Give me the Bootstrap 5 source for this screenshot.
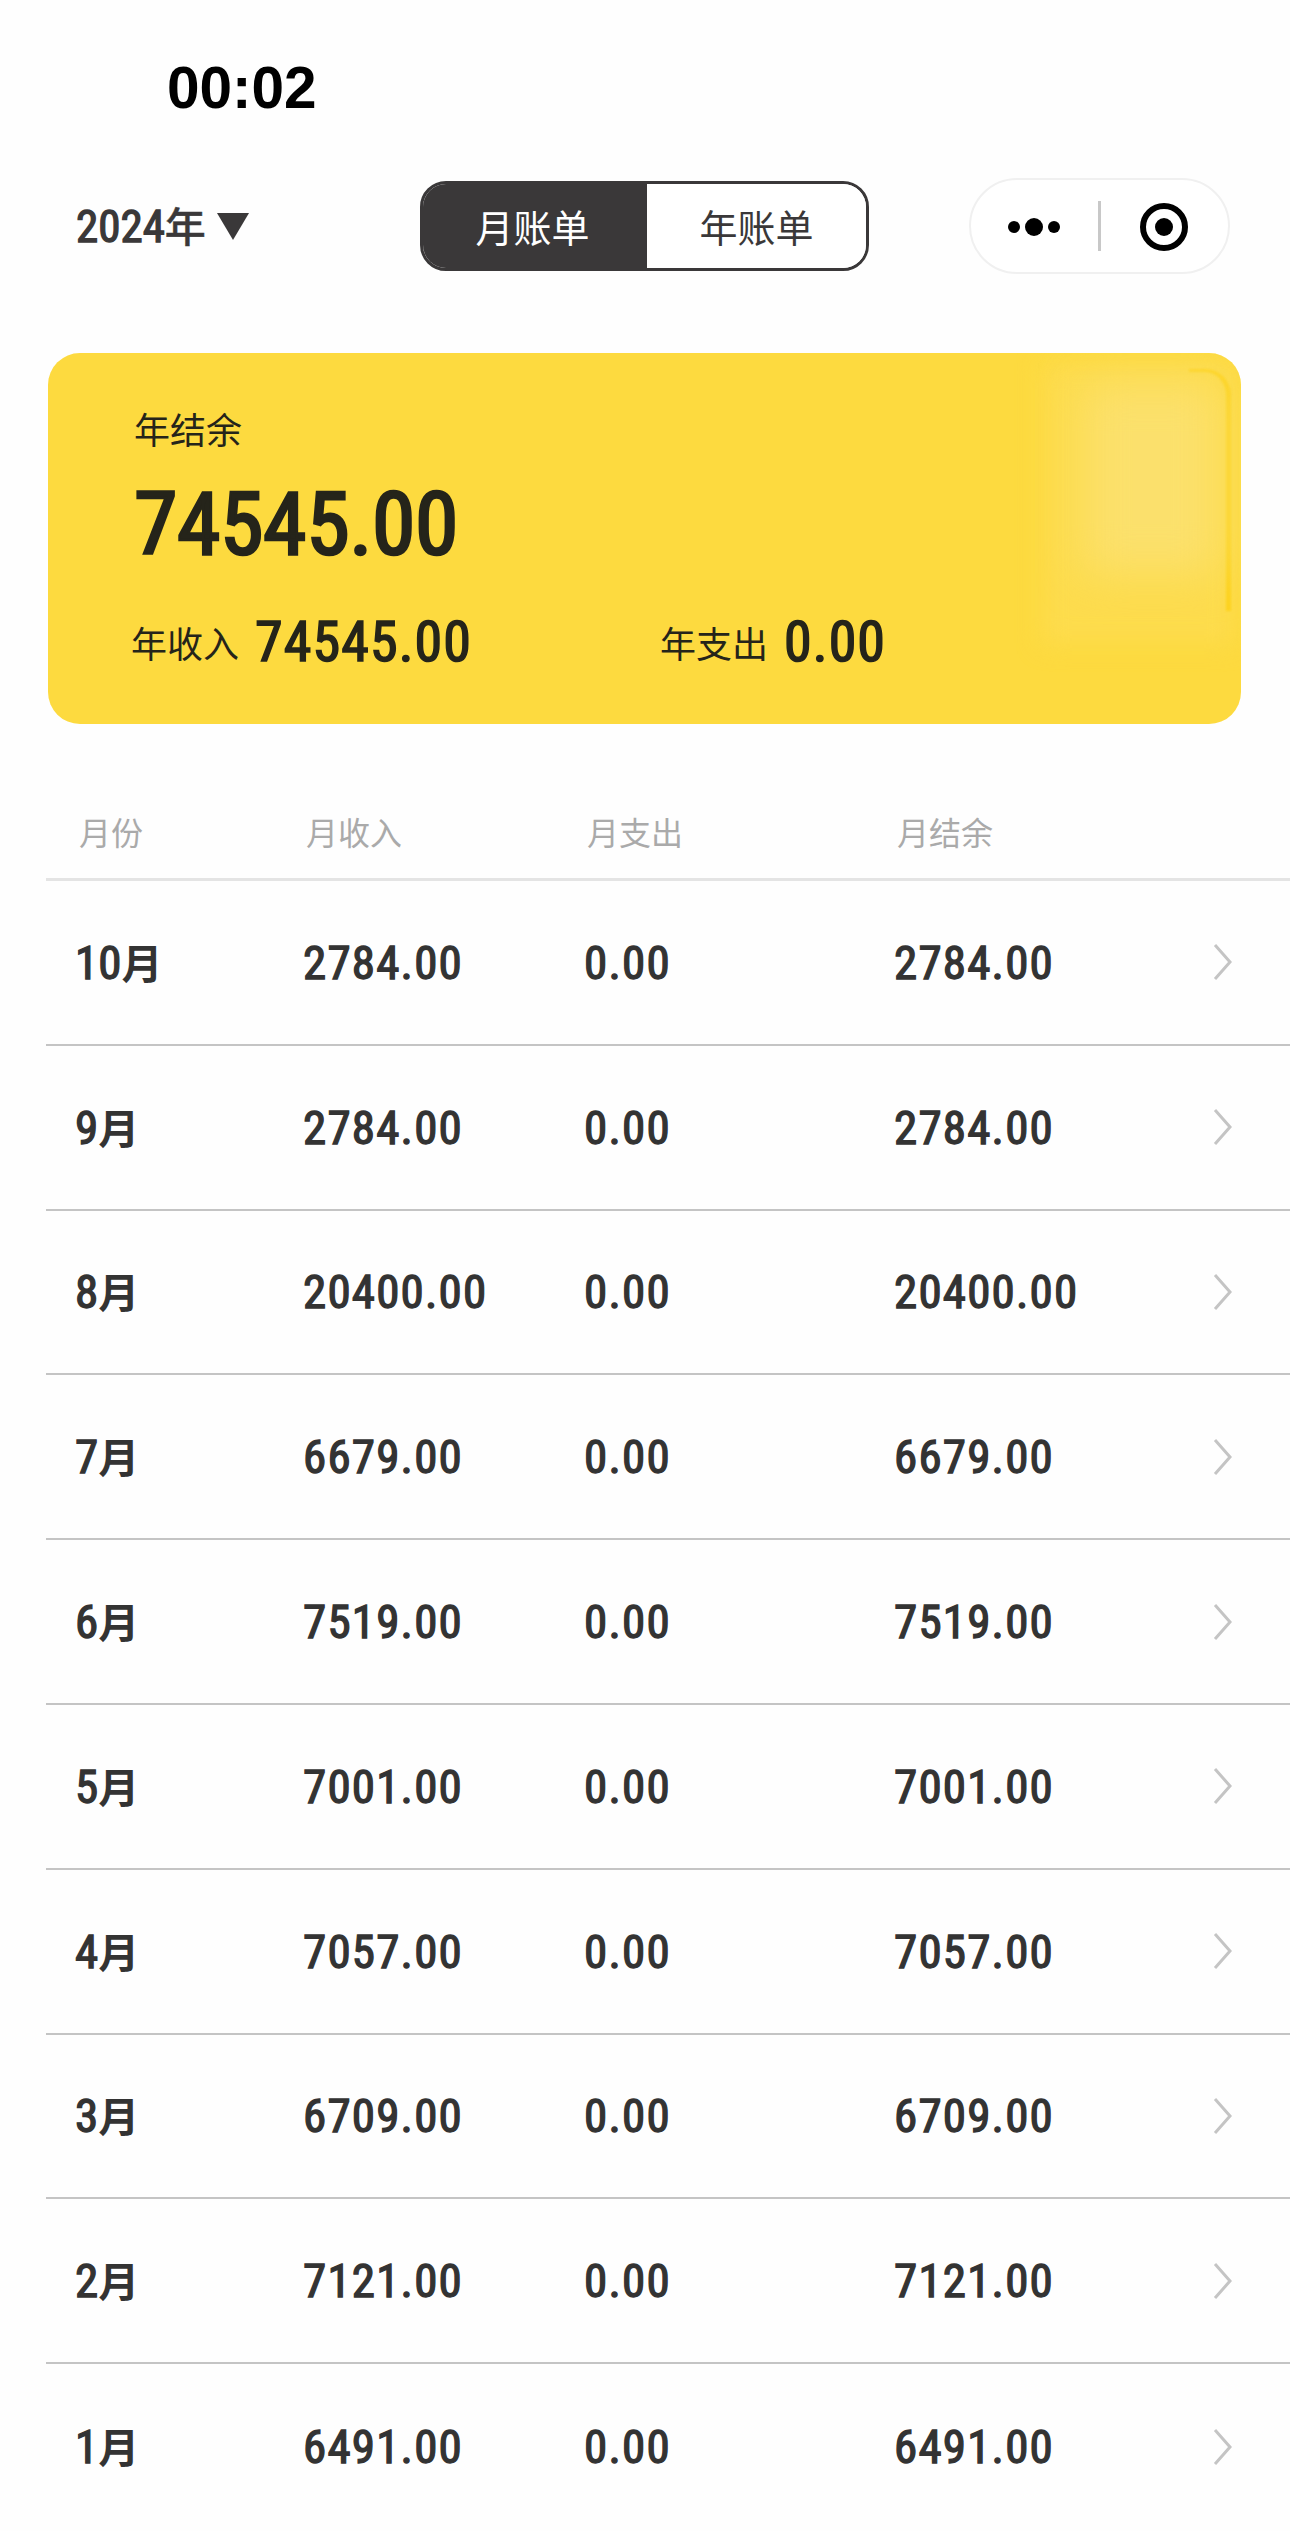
<!doctype html>
<html lang="zh-CN"><head><meta charset="utf-8"><title>账单</title>
<link rel="stylesheet" href="https://cdn.jsdelivr.net/npm/bootstrap@5.3.0/dist/css/bootstrap.min.css">
<style>
:root{--num:"Liberation Sans Narrow","Roboto Condensed","Liberation Sans","Noto Sans CJK SC",sans-serif;--cjk:"Noto Sans CJK SC",sans-serif}
html,body{margin:0;background:#fefefe}
body{width:1290px;height:2531px;overflow:hidden;font-family:var(--cjk);color:#333}
.st-time{height:178px;padding:58px 0 0 167px;font:700 58.5px/60px "Liberation Sans",sans-serif;color:#000;margin-bottom:0}
.top-bar{height:96px;margin-bottom:79px;padding:0 61px 0 76px}
.year-pick{width:344px;flex:none;font-family:var(--num);font-weight:400;-webkit-text-stroke:1.3px #3a3839;font-size:45px;color:#3a3839;gap:11px;line-height:1}
.year-pick b{font:500 41px/1 var(--cjk);-webkit-text-stroke:.4px #3a3839}
.seg{width:449px;height:90px;border:3px solid #3a3839;border-radius:26px;overflow:hidden;margin-right:100px;flex:none}
.seg span{flex:1 1 0;font-size:38px;line-height:1;color:#3a3839;background:#fff;text-align:center}
.seg span.on{background:#3a3839;color:#fff;flex:0 0 224px;padding-right:5px}
.capsule{width:261px;height:96px;border:2px solid #f0f0f0;border-radius:48px;background:#fff;flex:none}
.bal-card{margin:0 49px 0 48px;height:371px;background:#fdda3f;border-radius:32px;padding:0 0 0 84px;overflow:hidden;color:#25241a}
.glow{top:30px;right:22px;width:135px;height:190px;background:#fbe06c;filter:blur(22px)}
.glow2{top:10px;right:8px;width:190px;height:280px;background:#fddc4d;filter:blur(12px)}
.edge{top:16px;right:10px;width:42px;height:242px;border-right:5px solid #fdd31f;border-top:3px solid #fdd31f;border-radius:0 26px 0 0;filter:blur(1px)}
.b-label{position:relative;font-size:36px;line-height:1;padding-top:57px;margin-left:2px}
.b-total{position:relative;font:400 88px/1 var(--num);-webkit-text-stroke:2.6px #25241a;letter-spacing:-.4px;margin-top:34px;margin-left:2px}
.b-row{position:relative;margin-top:46px;margin-left:-1px;line-height:1}
.b-row .lbl{font-size:36px}
.b-row .val{font:400 56px/1 var(--num);-webkit-text-stroke:1.5px #25241a;letter-spacing:1.1px;margin-left:16px}
.b-cell{width:529px}
.tbl{margin:91px 0 0 46px}
.g-row{display:grid;grid-template-columns:227px 281px 310px 319px 1fr;align-items:center;padding-left:30px}
.g-head{height:66px;border-bottom:3px solid #e4e4e4;font-size:32px;line-height:1;color:#aaa;align-items:start}
.g-head span{padding-left:3px}
.g-body{height:164.8px;border-bottom:2px solid #c4c4c4;font:400 47px/1 var(--num);-webkit-text-stroke:1.3px #333;letter-spacing:1.2px;color:#333}
.g-body:last-child{border-bottom:0}
.g-body .m{letter-spacing:0;margin-left:-1px}
.g-body .m i{font:700 41px/1 var(--cjk);-webkit-text-stroke:0}
.chev{width:19px;height:36px;display:block}
</style></head><body>
<div class="st-time">00:02</div>
<div class="top-bar d-flex align-items-center">
  <div class="year-pick d-flex align-items-center"><span>2024<b>年</b></span><svg width="32" height="27" viewBox="0 0 32 27"><path d="M0 0H32L16 27Z" fill="#3a3839"/></svg></div>
  <div class="seg d-flex"><span class="on d-flex align-items-center justify-content-center">月账单</span><span class="d-flex align-items-center justify-content-center">年账单</span></div>
  <div class="capsule">
    <svg width="256" height="92" viewBox="0 0 256 92" class="d-block"><circle cx="43" cy="47" r="6" /><circle cx="63" cy="47" r="9"/><circle cx="83" cy="47" r="6"/><rect x="127" y="21" width="3" height="50" fill="#c8c8c8"/><circle cx="193" cy="47" r="21" fill="none" stroke="#000" stroke-width="6"/><circle cx="193" cy="47" r="9"/></svg>
  </div>
</div>
<div class="bal-card position-relative">
  <div class="glow2 position-absolute"></div><div class="edge position-absolute"></div><div class="glow position-absolute"></div>
  <div class="b-label">年结余</div>
  <div class="b-total">74545.00</div>
  <div class="b-row d-flex align-items-center">
    <div class="b-cell d-flex align-items-center"><span class="lbl">年收入</span><span class="val">74545.00</span></div>
    <div class="d-flex align-items-center"><span class="lbl">年支出</span><span class="val">0.00</span></div>
  </div>
</div>
<div class="tbl">
  <div class="g-row g-head"><span>月份</span><span>月收入</span><span>月支出</span><span>月结余</span></div>
  <div class="g-row g-body"><span class="m">10<i>月</i></span><span>2784.00</span><span>0.00</span><span>2784.00</span><svg class="chev" viewBox="0 0 19 36"><path d="M2 1L17 18L2 35" fill="none" stroke="#c4c4c4" stroke-width="3"/></svg></div>
  <div class="g-row g-body"><span class="m">9<i>月</i></span><span>2784.00</span><span>0.00</span><span>2784.00</span><svg class="chev" viewBox="0 0 19 36"><path d="M2 1L17 18L2 35" fill="none" stroke="#c4c4c4" stroke-width="3"/></svg></div>
  <div class="g-row g-body"><span class="m">8<i>月</i></span><span>20400.00</span><span>0.00</span><span>20400.00</span><svg class="chev" viewBox="0 0 19 36"><path d="M2 1L17 18L2 35" fill="none" stroke="#c4c4c4" stroke-width="3"/></svg></div>
  <div class="g-row g-body"><span class="m">7<i>月</i></span><span>6679.00</span><span>0.00</span><span>6679.00</span><svg class="chev" viewBox="0 0 19 36"><path d="M2 1L17 18L2 35" fill="none" stroke="#c4c4c4" stroke-width="3"/></svg></div>
  <div class="g-row g-body"><span class="m">6<i>月</i></span><span>7519.00</span><span>0.00</span><span>7519.00</span><svg class="chev" viewBox="0 0 19 36"><path d="M2 1L17 18L2 35" fill="none" stroke="#c4c4c4" stroke-width="3"/></svg></div>
  <div class="g-row g-body"><span class="m">5<i>月</i></span><span>7001.00</span><span>0.00</span><span>7001.00</span><svg class="chev" viewBox="0 0 19 36"><path d="M2 1L17 18L2 35" fill="none" stroke="#c4c4c4" stroke-width="3"/></svg></div>
  <div class="g-row g-body"><span class="m">4<i>月</i></span><span>7057.00</span><span>0.00</span><span>7057.00</span><svg class="chev" viewBox="0 0 19 36"><path d="M2 1L17 18L2 35" fill="none" stroke="#c4c4c4" stroke-width="3"/></svg></div>
  <div class="g-row g-body"><span class="m">3<i>月</i></span><span>6709.00</span><span>0.00</span><span>6709.00</span><svg class="chev" viewBox="0 0 19 36"><path d="M2 1L17 18L2 35" fill="none" stroke="#c4c4c4" stroke-width="3"/></svg></div>
  <div class="g-row g-body"><span class="m">2<i>月</i></span><span>7121.00</span><span>0.00</span><span>7121.00</span><svg class="chev" viewBox="0 0 19 36"><path d="M2 1L17 18L2 35" fill="none" stroke="#c4c4c4" stroke-width="3"/></svg></div>
  <div class="g-row g-body"><span class="m">1<i>月</i></span><span>6491.00</span><span>0.00</span><span>6491.00</span><svg class="chev" viewBox="0 0 19 36"><path d="M2 1L17 18L2 35" fill="none" stroke="#c4c4c4" stroke-width="3"/></svg></div>
</div>
<script src="https://cdn.jsdelivr.net/npm/bootstrap@5.3.0/dist/js/bootstrap.bundle.min.js"></script>
</body></html>
